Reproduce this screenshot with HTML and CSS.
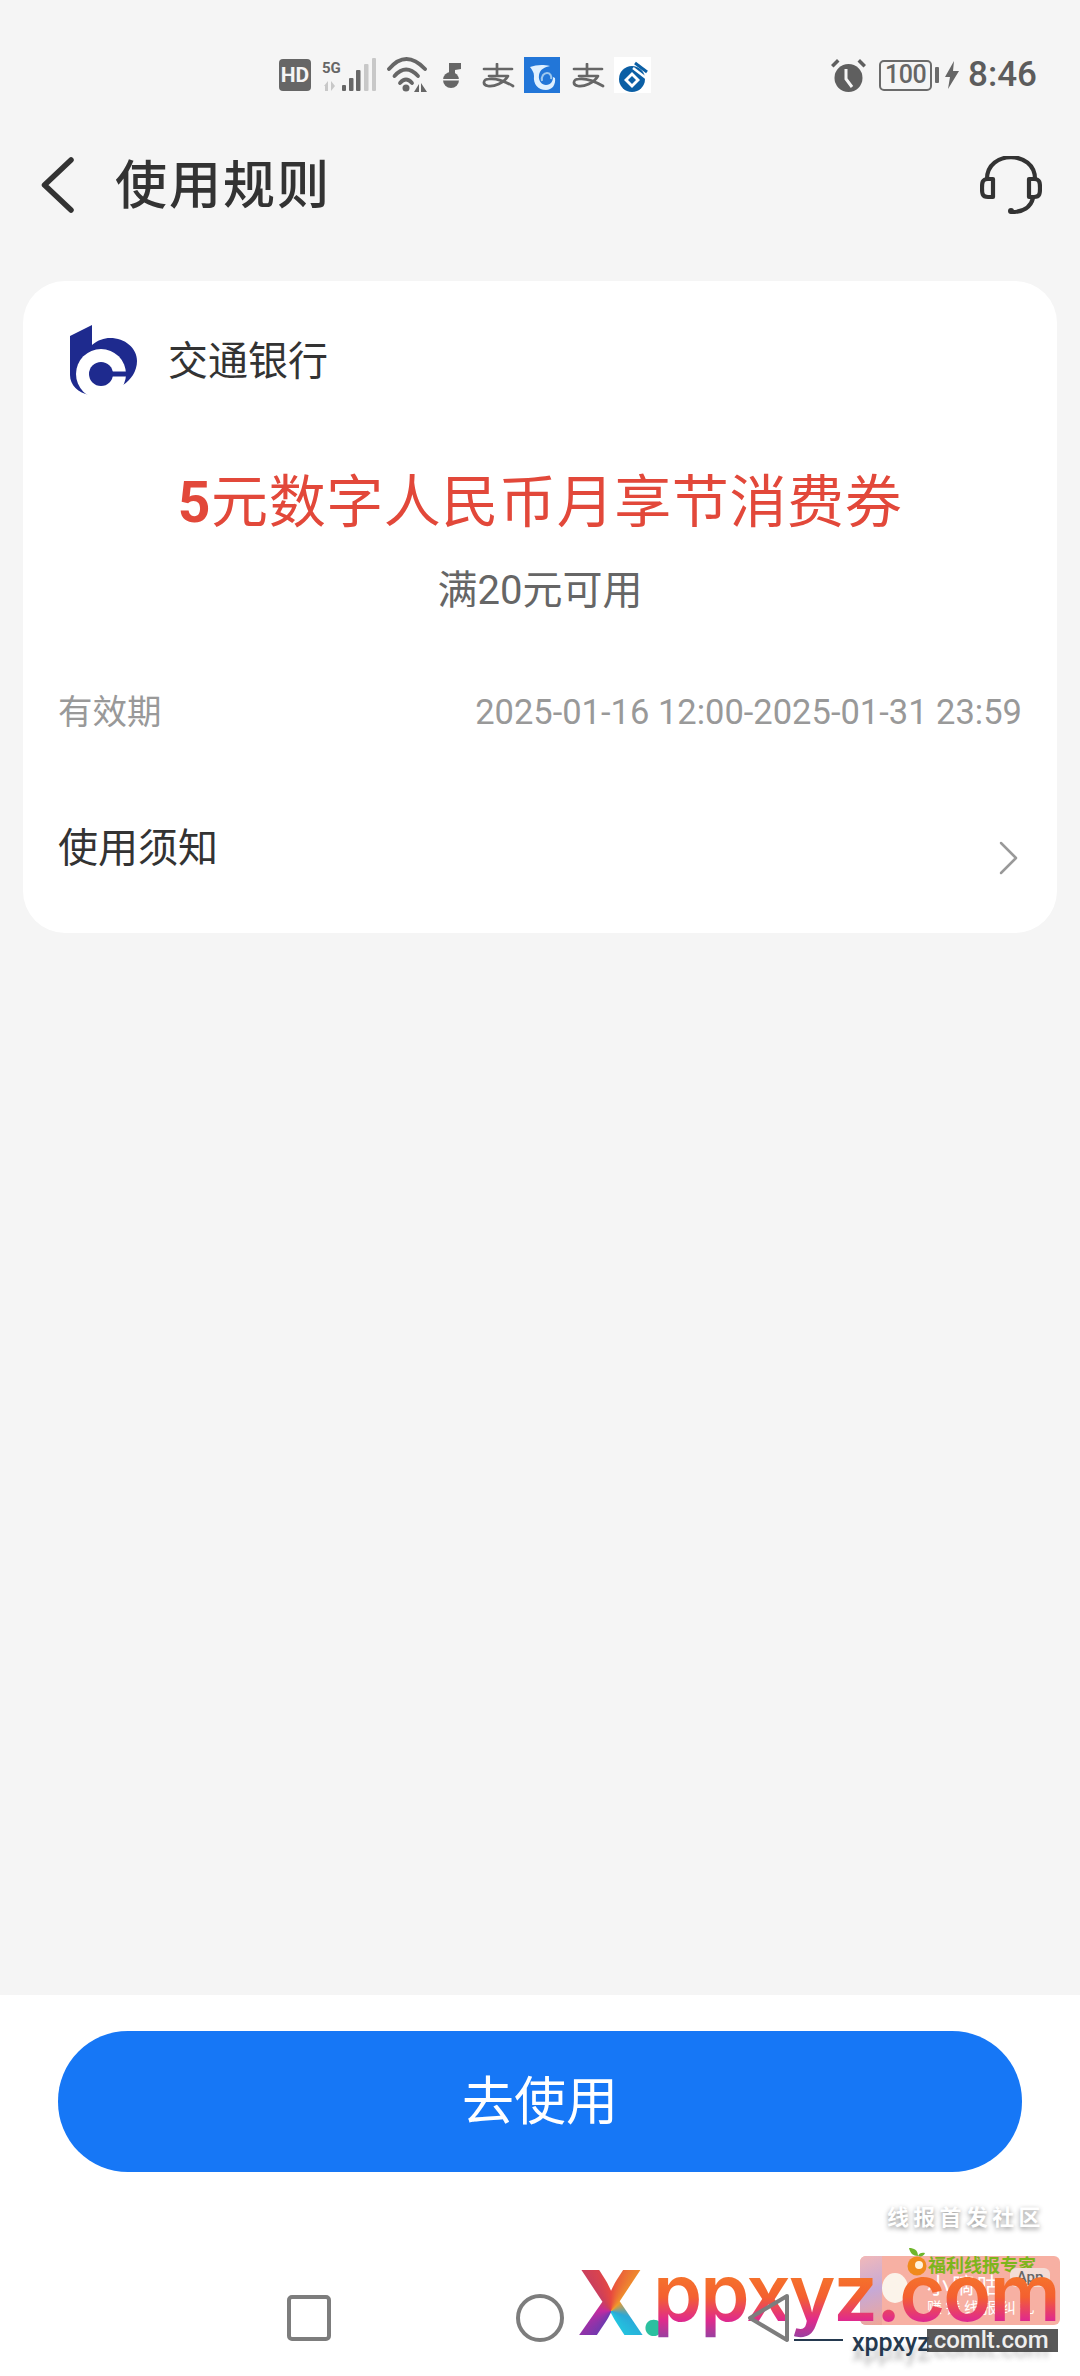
FILE: index.html
```html
<!DOCTYPE html>
<html lang="zh-CN">
<head>
<meta charset="utf-8">
<title>使用规则</title>
<link rel="stylesheet" href="styles.css">
</head>
<body>
<div class="screen">
  <div class="statusbar">
    <div class="status-icons">
      <svg class="ic" width="32" height="32" viewBox="0 0 32 32"><rect width="32" height="32" rx="4" fill="#666"/><text x="16" y="23" text-anchor="middle" class="hd">HD</text></svg>
      <svg class="ic" width="54" height="34" viewBox="0 0 54 34"><text x="0" y="15" class="fiveg">5G</text><g fill="#666"><rect x="20" y="27" width="4" height="6" rx="1"/><rect x="27" y="20" width="4.500" height="13" rx="1"/><rect x="34" y="12" width="4.500" height="21" rx="1"/></g><g fill="#c8c8c8"><rect x="42" y="6" width="4.500" height="27" rx="1"/><rect x="50" y="0" width="4" height="33" rx="1"/><path d="M2 28l4-5v10H3v-5zM9 33l4-5-4-5z"/></g></svg>
      <svg class="ic" width="40" height="36" viewBox="0 0 40 36"><g fill="none" stroke="#666" stroke-width="3.800" stroke-linecap="round"><path d="M2 12Q19-8 38 12"/><path d="M7.500 19Q19 6 31 19"/><path d="M13 26Q19 19 25 26"/></g><circle cx="19" cy="31" r="3.500" fill="#666"/><path d="M27 35l5-8v8zM34 26l6 9h-6z" fill="#666"/></svg>
      <svg class="ic gap-note" width="20" height="25" viewBox="0 0 20 25"><path d="M8 0h12v6l-6 1v4H8z" fill="#666"/><circle cx="10" cy="17" r="8" fill="#666"/><rect x="0" y="16" width="20" height="1.500" fill="#f5f5f5"/></svg>
      <svg class="ic gap-zhi" width="33" height="25" viewBox="0 0 33 25"><path d="M2 6h28M15 1v12M7 13h19C22 20 12 24 6 23 0 22 1 16 7 16c7-1 17 3 24 7" fill="none" stroke="#666" stroke-width="2.700" stroke-linecap="round" stroke-linejoin="round"/></svg>
      <svg class="ic gap-tile" width="36" height="36" viewBox="0 0 36 36"><rect width="36" height="36" fill="#2276d8"/><path d="M6 10c6-2 12-3 20-1-5 1-10 3-11 9-1 6 3 10 7 10 5 0 7-4 7-8l2 1c1 7-3 12-9 12-8 0-13-6-12-14 0-4-2-6-4-9z" fill="#dff0ff"/><path d="M18 24c-1-5 2-8 5-8s5 3 4 6" fill="none" stroke="#9cc7ee" stroke-width="2"/></svg>
      <svg class="ic gap-zhi2" width="33" height="25" viewBox="0 0 33 25"><path d="M2 6h28M15 1v12M7 13h19C22 20 12 24 6 23 0 22 1 16 7 16c7-1 17 3 24 7" fill="none" stroke="#666" stroke-width="2.700" stroke-linecap="round" stroke-linejoin="round"/></svg>
      <svg class="ic gap-tile" width="37" height="36" viewBox="0 0 37 36"><rect width="37" height="36" fill="#fff"/><circle cx="18" cy="22" r="13" fill="#0b5fa5"/><path d="M18 15l8 8-8 8-8-8z" fill="#fff"/><path d="M18 19l4 4-4 4-4-4z" fill="#0b5fa5"/><path d="M19 11l13 10" stroke="#fff" stroke-width="2.500"/><path d="M21 6l12 9" stroke="#0b5fa5" stroke-width="3"/></svg>
    </div>
    <div class="status-right">
      <svg class="ic" width="35" height="33" viewBox="0 0 35 33"><g fill="#5f5f5f"><circle cx="17.500" cy="19" r="14"/><path d="M0 6l6-6 2.500 2.500-6 6zM35 6l-6-6-2.500 2.500 6 6z"/></g><path d="M15 10v10l6 8" fill="none" stroke="#f5f5f5" stroke-width="3"/></svg>
      <div class="battery"><span class="battery-box">100</span><span class="battery-tip"></span></div>
      <svg class="ic bolt" width="14" height="28" viewBox="0 0 14 28"><path d="M9 0L0 16h5L3 28l11-18H8z" fill="#666"/></svg>
      <span class="clock">8:46</span>
    </div>
  </div>

  <header class="navbar">
    <svg class="back" width="36" height="56" viewBox="0 0 36 56"><path d="M31 3L4.500 28 31 53" fill="none" stroke="#333" stroke-width="5.500" stroke-linecap="round" stroke-linejoin="round"/></svg>
    <h1 class="title">使用规则</h1>
    <svg class="headset" width="62" height="58" viewBox="0 0 62 58"><g fill="none" stroke="#333" stroke-width="4.200" stroke-linecap="round" stroke-linejoin="round"><path d="M7 23C7-6 55-6 55 23"/><path d="M13 23H8c-6 0-6 4-6 9s0 9 6 9h5zM49 23h5c6 0 6 4 6 9s0 9-6 9h-5z"/><path d="M53 42c-2 9-10 14-21 14"/></g><circle cx="31" cy="55" r="3" fill="#333"/></svg>
  </header>

  <main class="card">
    <div class="bank">
      <svg class="bank-logo" width="68" height="71" viewBox="0 0 68 71"><path d="M0 11L22 0v20c6-5 12-7 18-7 15 0 27 10 27 23 0 10-6 19-14 24l3-11H31v21H20C8 68 0 60 0 50z" fill="#1e2a8e"/><circle cx="31" cy="49" r="25" fill="#fff"/><circle cx="31" cy="49" r="12" fill="#1e2a8e"/><rect x="38" y="46.500" width="18" height="5" fill="#1e2a8e"/></svg>
      <span class="bank-name">交通银行</span>
    </div>
    <div class="coupon-title"><b>5</b>元数字人民币月享节消费券</div>
    <div class="coupon-cond">满20元可用</div>
    <div class="row row-valid">
      <span>有效期</span>
      <span>2025-01-16 12:00-2025-01-31 23:59</span>
    </div>
    <div class="row row-notice">
      <span>使用须知</span>
      <svg class="chev" width="20" height="36" viewBox="0 0 20 36"><path d="M3 3l15 15L3 33" fill="none" stroke="#999" stroke-width="2.500" stroke-linecap="round" stroke-linejoin="round"/></svg>
    </div>
  </main>

  <div class="spacer"></div>

  <footer class="footer">
    <button class="cta">去使用</button>
    <nav class="navkeys">
      <svg width="44" height="46" viewBox="0 0 44 46"><rect x="2" y="2" width="40" height="42" rx="3" fill="none" stroke="#7d7d7d" stroke-width="4"/></svg>
      <svg width="48" height="50" viewBox="0 0 48 50"><circle cx="24" cy="25" r="22" fill="none" stroke="#7d7d7d" stroke-width="4"/></svg>
      <svg width="43" height="50" viewBox="0 0 43 50"><path d="M40 3L3 25l37 22z" fill="none" stroke="#7d7d7d" stroke-width="4" stroke-linejoin="round"/></svg>
    </nav>
  </footer>

  <div class="wm-social">线报首发社区</div>
  <div class="wm-card">
    <span class="wm-strip"></span>
    <span class="wm-mochi"></span>
    <svg class="wm-leaf" width="22" height="28" viewBox="0 0 22 28"><path d="M12 8C7 8 4 5 3 0c5 0 9 2 9 8zM12 8c1-3 4-4 7-3-1 3-4 4-7 3z" fill="#6fb52c"/><circle cx="11" cy="18" r="9.500" fill="#f08a1c"/><circle cx="13" cy="17" r="4" fill="#fff3dc"/></svg>
    <div class="wm-brand">福利线报专家</div>
    <div class="wm-name">小嘀咕</div>
    <div class="wm-app">App</div>
    <div class="wm-sub">赚钱线报纠扎</div>
  </div>
  <div class="wm-x">X</div>
  <div class="wm-dot">.</div>
  <div class="wm-word">ppxyz.com</div>
  <span class="wm-dash"></span>
  <div class="wm-url">xppxyz</div>
  <div class="wm-box">.comlt.com</div>
</div>
</body>
</html>
```
FILE: styles.css
```css
* { box-sizing: border-box; }
html, body { margin: 0; padding: 0; }
body { font-family: "Noto Sans CJK SC", "Roboto", sans-serif; background: #f5f5f5; }
.screen { position: relative; width: 1080px; height: 2376px; display: flex; flex-direction: column; background: #f5f5f5; overflow: hidden; }

.statusbar { height: 112px; display: flex; justify-content: space-between; align-items: center; padding: 38px 43px 0 279px; flex: none; }
.status-icons { display: flex; align-items: center; gap: 11px; }
.status-right { display: flex; align-items: center; }
.ic { display: block; flex: none; }
.gap-note { margin-left: 3px; }
.gap-zhi { margin-left: 10px; }
.gap-zhi2 { margin-left: 1px; }
.gap-tile { margin-left: -2px; }
.hd { font: 700 21px "Roboto", sans-serif; fill: #f5f5f5; }
.fiveg { font: 700 15px "Roboto", sans-serif; fill: #666; }
.battery { display: flex; align-items: center; margin-left: 13px; gap: 3px; }
.battery-box { width: 53px; height: 31px; border: 2.500px solid #6b6b6b; border-radius: 5px; font: 500 25px/26px "Roboto", sans-serif; color: #666; text-align: center; letter-spacing: -0.500px; }
.battery-tip { width: 4px; height: 16px; background: #6b6b6b; border-radius: 1px; }
.bolt { margin-left: 6px; }
.clock { font: 500 35px/36px "Roboto", sans-serif; color: #5c5c5c; margin-left: 9px; }

.navbar { height: 72px; margin-top: 37px; display: flex; align-items: center; padding: 0 38px 0 40px; flex: none; }
.back { flex: none; }
.title { margin: 0 0 6px 39px; flex: 1; font-size: 52px; line-height: 72px; font-weight: 500; color: #333; letter-spacing: 2px; }
.headset { flex: none; }

.card { margin: 60px 23px 0; height: 652px; flex: none; background: #fff; border-radius: 42px; display: flex; flex-direction: column; padding: 0 35px; }
.bank { display: flex; align-items: center; gap: 30px; margin: 44px 0 0 12px; height: 71px; color: #333; }
.bank-logo { flex: none; }
.bank-name { font-size: 40px; line-height: 48px; margin-bottom: 6px; }
.coupon-title { margin-top: 61px; text-align: center; font-size: 57px; line-height: 80px; letter-spacing: 0.600px; color: #e2483a; font-weight: 400; }
.coupon-title b { font-family: "Roboto", sans-serif; font-weight: 700; }
.coupon-cond { text-align: center; font-size: 40px; line-height: 56px; color: #666; margin-top: 20px; font-family: "Roboto", "Noto Sans CJK SC", sans-serif; }
.row { display: flex; justify-content: space-between; }
.row-valid { margin-top: 68px; font-size: 34.500px; line-height: 50px; color: #999; font-family: "Roboto", "Noto Sans CJK SC", sans-serif; }
.row-notice { margin-top: 78px; font-size: 40px; line-height: 60px; color: #333; align-items: flex-end; }
.chev { margin: 0 4px -1px 0; }

.spacer { flex: 1; }

.footer { height: 381px; flex: none; background: #fff; display: flex; flex-direction: column; align-items: center; padding-top: 36px; }
.cta { width: 964px; height: 141px; border: 0; padding: 0 0 9px; border-radius: 70px; background: #1677f6; color: #fff; font-family: inherit; font-size: 52px; flex: none; }
.navkeys { position: relative; z-index: 5; width: 100%; display: flex; align-items: center; gap: 185px; padding-left: 287px; margin-top: 121px; }
.navkeys svg + svg + svg { margin-left: -2px; }

.wm-social { position: absolute; z-index: 1; left: 887px; top: 2199px; font-size: 22px; line-height: 32px; letter-spacing: 4.300px; color: #fff; text-shadow: 0 2px 5px rgba(0,0,0,.45); font-weight: 700; white-space: nowrap; }
.wm-card { position: absolute; z-index: 1; left: 860px; top: 2256px; width: 200px; height: 69px; border-radius: 6px; background: #f7b0a3; }
.wm-strip { position: absolute; left: 0; top: 0; width: 22px; height: 100%; border-radius: 6px 0 0 6px; background: linear-gradient(160deg, #f2b9b9, #c6a9d6 50%, #f0a596); }
.wm-mochi { position: absolute; left: 22px; top: 17px; width: 26px; height: 30px; border-radius: 50%; background: #fbf3ea; }
.wm-leaf { position: absolute; left: 46px; top: -8px; }
.wm-brand { position: absolute; left: 68px; top: -1px; font-size: 18px; line-height: 18px; font-weight: 700; color: #7db51c; white-space: nowrap; }
.wm-name { position: absolute; left: 67px; top: 15px; font-size: 22px; line-height: 24px; letter-spacing: 3px; color: #fff; white-space: nowrap; }
.wm-app { position: absolute; left: 150px; top: 12px; width: 40px; height: 19px; border-radius: 6px; background: #f3dcd6; font: 500 15px/19px "Roboto", sans-serif; color: #666; text-align: center; }
.wm-sub { position: absolute; left: 67px; top: 41px; font-size: 15px; line-height: 20px; letter-spacing: 3.500px; color: #fff; white-space: nowrap; }

.wm-x { position: absolute; z-index: 2; left: 577px; top: 2253px; font: 800 89px/100px "Inter", sans-serif; background: conic-gradient(from 0deg at 50% 58%, #e8483f 0deg, #f09a2a 45deg, #2aa8d8 110deg, #22c8e0 160deg, #6a3ab0 205deg, #c42aa0 270deg, #cc3f5c 325deg, #e8483f 360deg); -webkit-background-clip: text; background-clip: text; color: transparent; }
.wm-dot { position: absolute; z-index: 2; left: 638px; top: 2253px; font: 800 89px/100px "Inter", sans-serif; color: #2bc0a0; }
.wm-word { position: absolute; z-index: 2; left: 653px; top: 2242px; font: 600 79px/100px "Inter", sans-serif; letter-spacing: -2px; background: linear-gradient(180deg, #f5702c 37%, #f46030 55%, #e02a8c 78%, #9a40a0 95%); -webkit-background-clip: text; background-clip: text; color: transparent; white-space: nowrap; }
.wm-dash { position: absolute; z-index: 3; left: 794px; top: 2339px; width: 49px; height: 2px; background: #24394f; }
.wm-url { position: absolute; z-index: 3; left: 852px; top: 2328px; font: 500 25px/30px "Roboto", sans-serif; color: #24394f; white-space: nowrap; text-shadow: 0 10px 5px rgba(60,60,60,.3); }
.wm-box { position: absolute; z-index: 3; left: 927px; top: 2329px; width: 131px; height: 23px; background: rgba(70,70,70,.9); font: 500 24px/23px "Roboto", sans-serif; color: #eee; text-align: right; padding-right: 10px; white-space: nowrap; text-shadow: 0 10px 5px rgba(60,60,60,.3); }
```
